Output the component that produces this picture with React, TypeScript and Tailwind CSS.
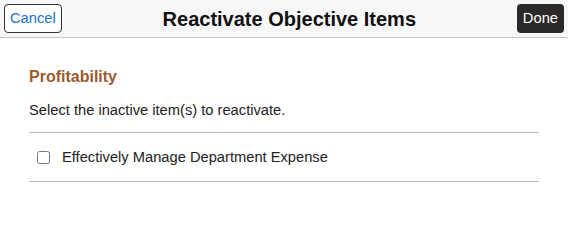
import React from "react";

export default function App() {
  return (
    <div className="w-[568px] h-[240px] bg-white font-['Liberation_Sans',Arial,sans-serif] text-[#222]">
      <div className="flex items-center justify-between h-[38px] px-[4px] bg-[#f7f7f7] border-b border-[#c8c8c8]">
        <button className="h-[29px] px-[5px] rounded-[4px] border border-[#333] bg-white text-[#1a73c8] text-[14.7px]">
          Cancel
        </button>
        <h1 className="text-[20px] font-bold text-[#111]">Reactivate Objective Items</h1>
        <button className="h-[29px] px-[6px] rounded-[4px] bg-[#2c2a28] text-white text-[14.7px]">
          Done
        </button>
      </div>
      <div className="px-[29px]">
        <h2 className="mt-[29px] text-[16px] font-bold leading-[20px] text-[#9c5a2c]">Profitability</h2>
        <p className="mt-[13px] text-[14.7px] leading-[20px] text-[#222]">Select the inactive item(s) to reactivate.</p>
        <div className="mt-[12px] border-t border-b border-[#bbb] flex items-center h-[50px] pl-[8px] w-[510px]">
          <input type="checkbox" className="w-[13px] h-[13px] m-0" />
          <span className="ml-[12px] text-[14.7px] text-[#222]">Effectively Manage Department Expense</span>
        </div>
      </div>
    </div>
  );
}
